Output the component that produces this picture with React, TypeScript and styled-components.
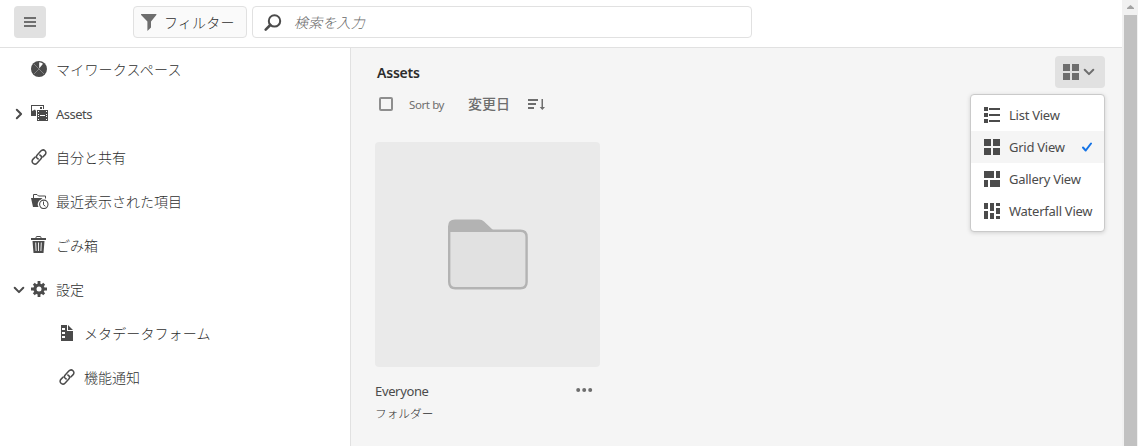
import React from 'react';
import styled, { createGlobalStyle } from 'styled-components';

const GlobalStyle = createGlobalStyle`
  * { box-sizing: border-box; }
  html, body { margin: 0; height: 100%; overflow: hidden; }
  body {
    background: #fff;
    color: #4b4b4b;
    font-family: "Noto Sans", "Noto Sans CJK JP", sans-serif;
    font-size: 14px;
    line-height: 20px;
  }
  button { font: inherit; color: inherit; margin: 0; padding: 0; border: 0; background: none; }
  svg { display: block; flex: none; }
`;

const Window = styled.div`
  display: flex;
  height: 446px;
  overflow: hidden;
`;
const Page = styled.div`
  flex: 1;
  min-width: 0;
  display: flex;
  flex-direction: column;
`;
const Header = styled.header`
  display: flex;
  flex: none;
  height: 48px;
  padding: 6px 0 0 14px;
  border-bottom: 1px solid #e1e1e1;
`;
const MenuButton = styled.button`
  display: grid;
  place-items: center;
  width: 32px;
  height: 32px;
  border-radius: 4px;
  background: #e1e1e1;
`;
const FilterButton = styled.button`
  display: flex;
  align-items: center;
  gap: 7px;
  width: 114px;
  height: 32px;
  margin-left: 87px;
  padding: 0 0 1px 7px;
  border: 1px solid #e1e1e1;
  border-radius: 4px;
  background: #fafafa;
  color: #303030;
  font-family: "Noto Sans CJK JP", sans-serif;
  font-weight: 300;
  letter-spacing: 0.2px;
`;
const SearchField = styled.div`
  display: flex;
  align-items: center;
  gap: 12px;
  width: 500px;
  height: 32px;
  margin-left: 5px;
  padding-left: 11px;
  border: 1px solid #e1e1e1;
  border-radius: 4px;
`;
const Placeholder = styled.span`
  padding-bottom: 1px;
  font-family: "Noto Sans CJK JP", sans-serif;
  font-style: italic;
  font-weight: 300;
  letter-spacing: 0.2px;
  color: #666;
`;
const Body = styled.div`
  flex: 1;
  min-height: 0;
  display: flex;
`;
const Sidebar = styled.nav`
  flex: none;
  width: 351px;
  border-right: 1px solid #e1e1e1;
`;
const NavItem = styled.div<{ $nested?: boolean }>`
  display: flex;
  align-items: center;
  height: 44px;
  padding-left: ${p => (p.$nested ? 40 : 12)}px;
`;
const NavArrow = styled.span`
  width: 19px;
`;
const NavLabel = styled.span<{ $latin?: boolean }>`
  margin-left: 7px;
  padding-bottom: ${p => (p.$latin ? 0 : 2)}px;
  white-space: nowrap;
`;
const Latin = styled.span<{ $size?: number; $track?: number }>`
  font-size: ${p => p.$size ?? 13}px;
  letter-spacing: ${p => p.$track ?? -0.25}px;
  white-space: nowrap;
`;
const Japanese = styled.span<{ $size?: number; $track?: number }>`
  font-family: "Noto Sans CJK JP", sans-serif;
  font-size: ${p => p.$size ?? 14}px;
  font-weight: 300;
  letter-spacing: ${p => p.$track ?? 0}px;
  color: #303030;
`;
const Main = styled.main`
  position: relative;
  flex: 1;
  min-width: 0;
  padding: 15px 17px 0 24px;
  background: #f5f5f5;
`;
const Title = styled.h1`
  margin: 0 0 0 2px;
  font-size: 14px;
  line-height: 20px;
  font-weight: 600;
  color: #2c2c2c;
`;
const SortRow = styled.div`
  display: flex;
  align-items: center;
  height: 20px;
  margin: 11px 0 0 4px;
  color: #6e6e6e;
`;
const Checkbox = styled.span`
  width: 14px;
  height: 14px;
  border: 2px solid #8e8e8e;
  border-radius: 2px;
  background: #f5f5f5;
`;
const SortLabel = styled.span`
  width: 59px;
  margin-left: 16px;
  line-height: 20px;
`;
const SortValue = styled.span`
  width: 60px;
  padding-bottom: 3px;
  font-family: "Noto Sans CJK JP", sans-serif;
  font-weight: 500;
`;
const Card = styled.article`
  width: 225px;
  margin-top: 28px;
`;
const Preview = styled.div`
  display: grid;
  place-items: center;
  width: 225px;
  height: 225px;
  border-radius: 4px;
  background: #eaeaea;
`;
const CardFooter = styled.div`
  display: flex;
  align-items: center;
  justify-content: space-between;
  height: 20px;
  margin-top: 14px;
  padding-right: 7px;
`;
const CardType = styled.div`
  margin-top: 2px;
`;
const ViewButton = styled.button`
  position: absolute;
  top: 8px;
  right: 17px;
  display: flex;
  align-items: center;
  gap: 3px;
  width: 50px;
  height: 32px;
  padding-left: 8px;
  border-radius: 4px;
  background: #e1e1e1;
`;
const ViewMenu = styled.div`
  position: absolute;
  top: 46px;
  right: 17px;
  width: 135px;
  padding: 4px 0;
  border: 1px solid #cacaca;
  border-radius: 4px;
  background: #fff;
  box-shadow: 0 1px 4px rgba(0, 0, 0, 0.15);
`;
const ViewOption = styled.div<{ $selected?: boolean }>`
  display: flex;
  align-items: center;
  height: 32px;
  padding: 0 12px 0 13px;
  background: ${p => (p.$selected ? '#f5f5f5' : '#fff')};
`;
const OptionLabel = styled.span`
  flex: 1;
  margin-left: 9px;
`;
const Scrollbar = styled.div`
  flex: none;
  width: 16px;
  padding: 5px 1px 0 2px;
  background: #f1f1f1;
`;
const Thumb = styled.div`
  height: 440px;
  margin-top: 6px;
  background: #c1c1c1;
`;

const Icon = ({ children, w = 16, h = 16, fill = '#4b4b4b' }: { children: React.ReactNode; w?: number; h?: number; fill?: string }) => (
  <svg width={w} height={h} viewBox={`0 0 ${w} ${h}`} fill={fill}>{children}</svg>
);

const WorkspaceIcon = () => (
  <Icon>
    <circle cx="8" cy="8" r="8" />
    <path d="M8.200 7.500V1.200Q10.500 1.200 12 2.700Z" fill="#fff" />
    <path d="M3 3l10 10M3 13l5-5" stroke="#999" strokeWidth=".7" />
  </Icon>
);
const AssetsIcon = () => (
  <Icon w={17} h={18}>
    <path d="M0 1h13v4h-1V2H1v5l3-1.500L5 7v5H0Z" />
    <path d="M9 3h2v2H9z" />
    <path d="M6 6h11v11H6z" />
    <path d="M7 7h1v1H7zM7 10h1v1H7zM7 12h1v1H7zM7 15h1v1H7zM15 7h1v1h-1zM15 10h1v1h-1zM15 12h1v1h-1zM15 15h1v1h-1zM9 11h5v1H9z" fill="#fff" />
    <path d="M5.500 17V5.500H17" fill="none" stroke="#fff" />
  </Icon>
);
const LinkIcon = () => (
  <Icon>
    <g fill="none" stroke="#4b4b4b" strokeWidth="1.500" strokeLinecap="round">
      <path d="M7.200 10C5.200 9 4.900 7.300 6.200 5.900L9.800 2.100c1.300-1.400 3-1.500 4.200-.4 1.300 1.200 1.200 2.900-.1 4.200L11.800 8" />
      <path d="M8.800 6C10.800 7 11.100 8.700 9.800 10.100L6.200 13.900c-1.300 1.400-3 1.500-4.200.4-1.300-1.200-1.200-2.900.1-4.200L4.200 8" />
    </g>
  </Icon>
);
const RecentIcon = () => (
  <Icon w={18}>
    <path d="M2.500 5V1.500H6L7.500 3h7v2.500" fill="none" stroke="#4b4b4b" />
    <path d="M0 5h11.500L10 6.500A5 5 0 0 0 7.500 14H2Z" />
    <circle cx="12.800" cy="11.300" r="4.200" fill="#fff" stroke="#4b4b4b" strokeWidth="1.100" />
    <path d="M12.500 8.500V11.800l1.900 1.500" fill="none" stroke="#4b4b4b" strokeWidth="1" />
  </Icon>
);
const TrashIcon = () => (
  <Icon h={18}>
    <path d="M5 2.500V1.500q0-1 1-1h3q1 0 1 1v1" fill="none" stroke="#4b4b4b" />
    <path d="M0 2h15v2H0zM1.500 5h12l-1 12h-10Z" />
    <path d="M4.700 6.500l.4 8.500M7.500 6.500V15M10.300 6.500l-.4 8.500" stroke="#fff" strokeWidth=".9" />
  </Icon>
);
const GearIcon = () => (
  <Icon>
    <g stroke="#4b4b4b" strokeWidth="2.800">
      <path d="M8 0v16M0 8h16M2.800 2.800l10.400 10.400M13.200 2.800 2.800 13.200" />
    </g>
    <circle cx="8" cy="8" r="5.600" />
    <circle cx="8" cy="8" r="2.500" fill="#fff" />
  </Icon>
);
const FormIcon = () => (
  <Icon>
    <path d="M2 0h6v6h6v10H2Z M9 0l5 5H9Z" />
    <path d="M3 3h3v2H3zM3 7h3v2H3zM3 11h3v2H3z" fill="#fff" />
  </Icon>
);
const Chevron = ({ down = false, color = '#4b4b4b' }: { down?: boolean; color?: string }) => (
  <Icon w={14} h={14}>
    <path d={down ? 'M2.700 4.800 7 9.100l4.300-4.300' : 'M4.800 2.700 9.100 7l-4.300 4.300'} fill="none" stroke={color} strokeWidth="2" strokeLinecap="round" strokeLinejoin="round" />
  </Icon>
);
const ListIcon = () => (
  <Icon><path d="M0 0h4v4H0zM0 6h4v4H0zM0 12h4v4H0zM5 1h11v2H5zM5 7h11v2H5zM5 13h11v2H5z" /></Icon>
);
const GridIcon = ({ color }: { color?: string }) => (
  <Icon fill={color}><path d="M0 0h7v7H0zM9 0h7v7H9zM0 9h7v7H0zM9 9h7v7H9z" /></Icon>
);
const GalleryIcon = () => (
  <Icon><path d="M0 0h10v7H0zM12 0h4v7h-4zM0 9h4v7H0zM6 9h10v7H6z" /></Icon>
);
const WaterfallIcon = () => (
  <Icon><path d="M0 0h4v6H0zM0 8h4v8H0zM6 0h4v8H6zM6 10h4v6H6zM12 0h4v3h-4zM12 5h4v6h-4zM12 13h4v3h-4z" /></Icon>
);
const FolderIcon = () => (
  <Icon w={80} h={71}>
    <path d="M1.200 12.500V63q0 6.200 6.200 6.200h65q6.200 0 6.200-6.200V18q0-6.200-6.200-6.200H1.200Z" fill="#e1e1e1" stroke="#b3b3b3" strokeWidth="2.400" />
    <path d="M0 13V7.500Q0 .5 7 .5h24q3 0 5 2l9 8.500V13Z" fill="#b3b3b3" />
  </Icon>
);

const navItems = [
  { label: 'マイワークスペース', icon: <WorkspaceIcon />, track: 0.2 },
  { label: 'Assets', icon: <AssetsIcon />, arrow: <Chevron />, latin: true },
  { label: '自分と共有', icon: <LinkIcon /> },
  { label: '最近表示された項目', icon: <RecentIcon /> },
  { label: 'ごみ箱', icon: <TrashIcon /> },
  { label: '設定', icon: <GearIcon />, arrow: <Chevron down /> },
  { label: 'メタデータフォーム', icon: <FormIcon />, nested: true, track: 0.1 },
  { label: '機能通知', icon: <LinkIcon />, nested: true },
];
const IconSlot = styled.span`
  flex: none;
  width: 18px;
  padding-bottom: 2px;
`;
const views = [
  { label: 'List View', icon: <ListIcon /> },
  { label: 'Grid View', icon: <GridIcon />, selected: true },
  { label: 'Gallery View', icon: <GalleryIcon /> },
  { label: 'Waterfall View', icon: <WaterfallIcon /> },
];

export default function App() {
  return (
    <Window>
      <GlobalStyle />
      <Page>
        <Header>
          <MenuButton aria-label="Menu">
            <Icon w={12} h={10} fill="#6e6e6e"><path d="M0 0h12v2H0zM0 4h12v2H0zM0 8h12v2H0z" /></Icon>
          </MenuButton>
          <FilterButton>
            <Icon h={18} fill="#6e6e6e"><path d="M.3 1h14.900q.5.400.1.900L10 8.500v6L6.400 18V8.500L.1 1.900Q-.2 1.200.3 1Z" /></Icon>
            フィルター
          </FilterButton>
          <SearchField>
            <Icon w={18} h={18}>
              <circle cx="10.500" cy="7.900" r="5.700" fill="none" stroke="#4b4b4b" strokeWidth="2" />
              <path d="m6.300 12-4.600 4.600" stroke="#4b4b4b" strokeWidth="2.600" strokeLinecap="round" />
            </Icon>
            <Placeholder>検索を入力</Placeholder>
          </SearchField>
        </Header>
        <Body>
          <Sidebar>
            {navItems.map(item => (
              <NavItem key={item.label} $nested={item.nested}>
                <NavArrow>{item.arrow}</NavArrow>
                <IconSlot>{item.icon}</IconSlot>
                <NavLabel $latin={item.latin}>
                  {item.latin ? <Latin $track={-0.5}>{item.label}</Latin> : <Japanese $track={item.track}>{item.label}</Japanese>}
                </NavLabel>
              </NavItem>
            ))}
          </Sidebar>
          <Main>
            <Title><Latin $size={14} $track={-0.2}>Assets</Latin></Title>
            <SortRow>
              <Checkbox />
              <SortLabel><Latin $size={11.5} $track={-0.4}>Sort by</Latin></SortLabel>
              <SortValue>変更日</SortValue>
              <Icon w={18} h={14} fill="#6e6e6e">
                <path d="M0 2h10v2H0zM0 6h8v2H0zM0 10h6v2H0zM13.500 2h1.500v8h2L14.300 13 11.700 10h1.800z" />
              </Icon>
            </SortRow>
            <Card>
              <Preview><FolderIcon /></Preview>
              <CardFooter>
                <Latin $track={-0.35}>Everyone</Latin>
                <Icon w={17} h={6} fill="#6e6e6e">
                  <circle cx="2.200" cy="2" r="2" /><circle cx="8.200" cy="2" r="2" /><circle cx="14.200" cy="2" r="2" />
                </Icon>
              </CardFooter>
              <CardType><Japanese $size={11.67}>フォルダー</Japanese></CardType>
            </Card>
            <ViewButton aria-label="View">
              <GridIcon color="#6e6e6e" />
              <Chevron down color="#6e6e6e" />
            </ViewButton>
            <ViewMenu>
              {views.map(view => (
                <ViewOption key={view.label} $selected={view.selected}>
                  {view.icon}
                  <OptionLabel><Latin>{view.label}</Latin></OptionLabel>
                  {view.selected && (
                    <Icon w={10} h={10}>
                      <path d="m1 5.500 2.700 3L9 1.500" fill="none" stroke="#1473e6" strokeWidth="2" strokeLinecap="round" strokeLinejoin="round" />
                    </Icon>
                  )}
                </ViewOption>
              ))}
            </ViewMenu>
          </Main>
        </Body>
      </Page>
      <Scrollbar>
        <Icon w={13} h={4} fill="#a3a3a3"><path d="M3 4V3l3.500-3L10 3v1Z" /></Icon>
        <Thumb />
      </Scrollbar>
    </Window>
  );
}
